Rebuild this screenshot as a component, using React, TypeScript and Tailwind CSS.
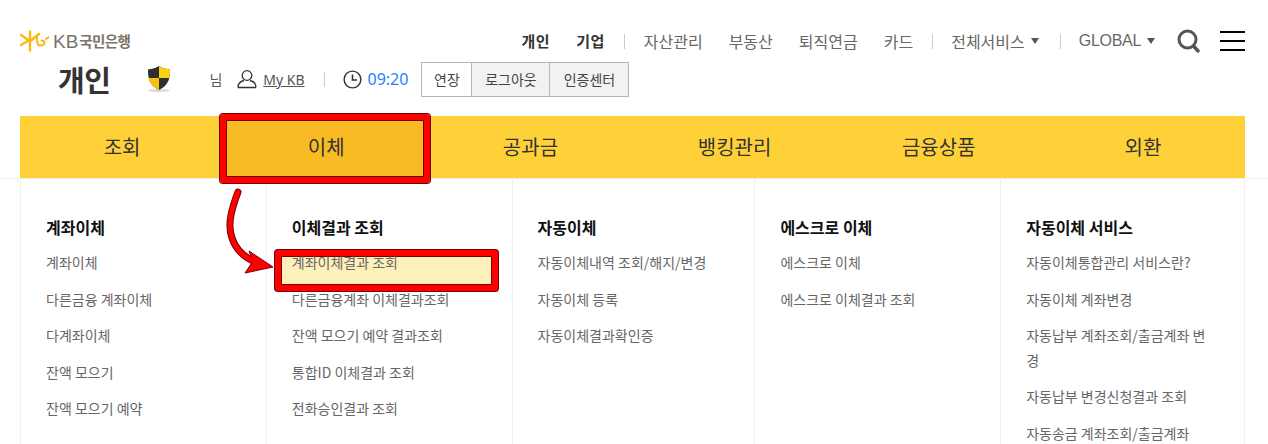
import { ChevronDown } from "lucide-react";

const font = "font-['Noto_Sans_CJK_KR','Noto_Sans',sans-serif]";

const menus = ["조회", "이체", "공과금", "뱅킹관리", "금융상품", "외환"];

const columns = [
  {
    title: "계좌이체",
    width: "w-[246px]",
    items: ["계좌이체", "다른금융 계좌이체", "다계좌이체", "잔액 모으기", "잔액 모으기 예약"],
  },
  {
    title: "이체결과 조회",
    width: "w-[246px]",
    items: ["계좌이체결과 조회", "다른금융계좌 이체결과조회", "잔액 모으기 예약 결과조회", "통합ID 이체결과 조회", "전화승인결과 조회"],
  },
  {
    title: "자동이체",
    width: "w-[243px]",
    items: ["자동이체내역 조회/해지/변경", "자동이체 등록", "자동이체결과확인증"],
  },
  {
    title: "에스크로 이체",
    width: "w-[246px]",
    items: ["에스크로 이체", "에스크로 이체결과 조회"],
  },
  {
    title: "자동이체 서비스",
    width: "w-[244px]",
    items: [
      "자동이체통합관리 서비스란?",
      "자동이체 계좌변경",
      "자동납부 계좌조회/출금계좌 변경",
      "자동납부 변경신청결과 조회",
      "자동송금 계좌조회/출금계좌",
    ],
  },
];

function Logo() {
  return (
    <div className="flex items-center">
      <svg width="29" height="22" viewBox="0 0 29 22" fill="none">
        <g stroke="#fbb713" strokeWidth="2.4" strokeLinecap="round">
          <path d="M10 1.5 V20.5" />
          <path d="M1 5 L9 10.5 L1 15" />
          <path d="M19 4 L11 10.5" />
        </g>
        <path d="M17 6 C17 12 17 16 21 15.5 C26 15 25 10 21.5 10.5 M26 9 L29 7" stroke="#fbb713" strokeWidth="2" strokeLinecap="round" />
      </svg>
      <span className="ml-[4px] text-[19px] leading-none text-[#7a7369] tracking-[0px] font-['Liberation_Sans',sans-serif]">KB</span>
      <span className="ml-[1px] text-[14.5px] leading-none font-bold text-[#7a7369] tracking-[-0.6px]">국민은행</span>
    </div>
  );
}

function Shield() {
  return (
    <svg width="26" height="30" viewBox="0 0 26 30">
      <ellipse cx="13" cy="26.5" rx="11" ry="1.5" fill="#d8d8d8" />
      <path d="M13 2 C9 4.5 6 5 2 5.5 C2 14 3 21 13 26 C23 21 24 14 24 5.5 C20 5 17 4.5 13 2 Z" fill="#2f2f2f" />
      <path d="M13 2 C17 4.5 20 5 24 5.5 C24 9 23.8 11.5 23.4 14 L13 14 Z" fill="#fcd116" />
      <path d="M13 14 L2.6 14 C3.5 19 6 22.5 13 26 Z" fill="#fcc010" />
    </svg>
  );
}

function TopNav() {
  return (
    <div className="flex items-center text-[16px] leading-[20px] text-[#666]">
      <span className="font-bold text-[#333] text-[15px] tracking-[0.5px]">개인</span>
      <span className="ml-[26px] font-bold text-[#333] text-[15px] tracking-[0.5px]">기업</span>
      <span className="ml-[19px] h-[15px] w-px bg-[#ccc]" />
      <span className="ml-[19px]">자산관리</span>
      <span className="ml-[26px]">부동산</span>
      <span className="ml-[26px]">퇴직연금</span>
      <span className="ml-[26px]">카드</span>
      <span className="ml-[19px] h-[15px] w-px bg-[#ccc]" />
      <span className="ml-[18px]">전체서비스</span>
      <span className="ml-[6px] border-x-[4px] border-t-[6px] border-x-transparent border-t-[#555]" />
      <span className="ml-[21px] h-[15px] w-px bg-[#ccc]" />
      <span className="ml-[18px] font-['Liberation_Sans',sans-serif] tracking-[-0.3px]">GLOBAL</span>
      <span className="ml-[6px] border-x-[4px] border-t-[6px] border-x-transparent border-t-[#555]" />
      <svg className="ml-[22px]" width="23" height="24" viewBox="0 0 23 24" fill="none">
        <circle cx="10.5" cy="10.5" r="8.5" stroke="#555" strokeWidth="3" />
        <path d="M16.5 17 L21 22" stroke="#555" strokeWidth="3.4" strokeLinecap="round" />
      </svg>
      <div className="ml-[20px] flex flex-col gap-[7px]">
        <span className="h-[2px] w-[25px] bg-black" />
        <span className="h-[2px] w-[25px] bg-black" />
        <span className="h-[2px] w-[25px] bg-black" />
      </div>
    </div>
  );
}

function SessionRow() {
  return (
    <div className="flex items-center h-[36px] ml-[38px]">
      <span className="text-[29px] leading-none font-bold text-[#333] tracking-[-0.5px]">개인</span>
      <span className="ml-[36px]">
        <Shield />
      </span>
      <span className="ml-[37px] text-[14px] text-[#555]">님</span>
      <svg className="ml-[15px]" width="20" height="20" viewBox="0 0 20 20" fill="none" stroke="#333" strokeWidth="1.3">
        <circle cx="10" cy="6.5" r="4.8" />
        <path d="M1 18.5 C1 13.5 5 12 7 11.5 M19 18.5 C19 13.5 15 12 13 11.5 M1 18.5 H19" />
      </svg>
      <span className="ml-[6px] text-[14px] text-[#555] underline font-['Noto_Sans',sans-serif]">My KB</span>
      <span className="ml-[19px] h-[15px] w-px bg-[#ccc]" />
      <svg className="ml-[18px]" width="19" height="19" viewBox="0 0 19 19" fill="none" stroke="#333" strokeWidth="1.4">
        <circle cx="9.5" cy="9.5" r="8.4" />
        <path d="M9.5 4.5 V10 H14" strokeWidth="1.6" />
      </svg>
      <span className="ml-[6px] text-[16px] text-[#1f7fff] font-['Noto_Sans',sans-serif]">09:20</span>
      <div className="ml-[13px] flex h-[35px] border border-[#b5b5b5] text-[14px] text-[#444]">
        <span className="flex w-[49px] items-center justify-center">연장</span>
        <span className="flex w-[78px] items-center justify-center border-l border-[#b5b5b5] bg-[#f2f2f2]">로그아웃</span>
        <span className="flex w-[79px] items-center justify-center border-l border-[#b5b5b5] bg-[#f2f2f2]">인증센터</span>
      </div>
    </div>
  );
}

export default function App() {
  return (
    <div className={`relative h-[444px] w-[1268px] overflow-hidden bg-white ${font}`}>
      <div className="flex items-center justify-between pl-[20px] pr-[23px] pt-[22px] h-[60px]">
        <Logo />
        <TopNav />
      </div>
      <div className="pl-[20px] mt-[1px]">
        <SessionRow />
      </div>

      {/* yellow menu */}
      <div className="mt-[19px] border-b border-[#f0f0f0]">
        <div className="ml-[20px] flex h-[62px] w-[1225px] bg-[#ffd139]">
          {menus.map((m, i) => (
            <div key={m} className={`flex flex-1 items-center justify-center text-[20px] text-[#333] ${i === 1 ? "bg-[#f9bb24]" : ""}`}>
              {m}
            </div>
          ))}
        </div>
      </div>

      {/* dropdown */}
      <div className="ml-[20px] flex w-[1225px] border-r border-[#f0f0f0]">
        {columns.map((c) => (
          <div key={c.title} className={`${c.width} h-[300px] border-l border-[#f0f0f0] pl-[25px] pr-[20px] pt-[35px]`}>
            <h3 className="text-[16px] leading-[26px] font-bold text-[#111]">{c.title}</h3>
            <ul className="mt-[10px] flex flex-col gap-[12px]">
              {c.items.map((t, i) => (
                <li key={t} className={`relative z-10 text-[14px] leading-[24.5px] text-[#666] ${t === "자동납부 계좌조회/출금계좌 변경" ? "pr-[12px]" : ""}`}>
                  {t}
                </li>
              ))}
            </ul>
          </div>
        ))}
      </div>

      {/* red annotation boxes and arrow */}
      <div className="absolute left-[220px] top-[114px] h-[69px] w-[210px] rounded-[3px] border-[6px] border-[#f00] shadow-[0_0_0_1px_#700,inset_0_0_0_1px_#700]" />
      <div className="absolute left-[275px] top-[250px] h-[41px] w-[223px] rounded-[3px] border-[6px] border-[#f00] bg-[#fdf0b9] shadow-[0_0_0_1px_#700,inset_0_0_0_1px_#700]" />
      <svg className="absolute left-[215px] top-[180px]" width="70" height="100" viewBox="215 180 70 100" fill="none">
        <path d="M238 192 C232 208 227 224 232 238 C236 250 244 258 258 263" stroke="#700" strokeWidth="7" strokeLinecap="round" />
        <path d="M273 267 L249 251 L253 261 L245 273 Z" fill="#f00" stroke="#700" strokeWidth="1" />
        <path d="M238 192 C232 208 227 224 232 238 C236 250 244 258 258 263" stroke="#f00" strokeWidth="5" strokeLinecap="round" />
      </svg>
    </div>
  );
}
